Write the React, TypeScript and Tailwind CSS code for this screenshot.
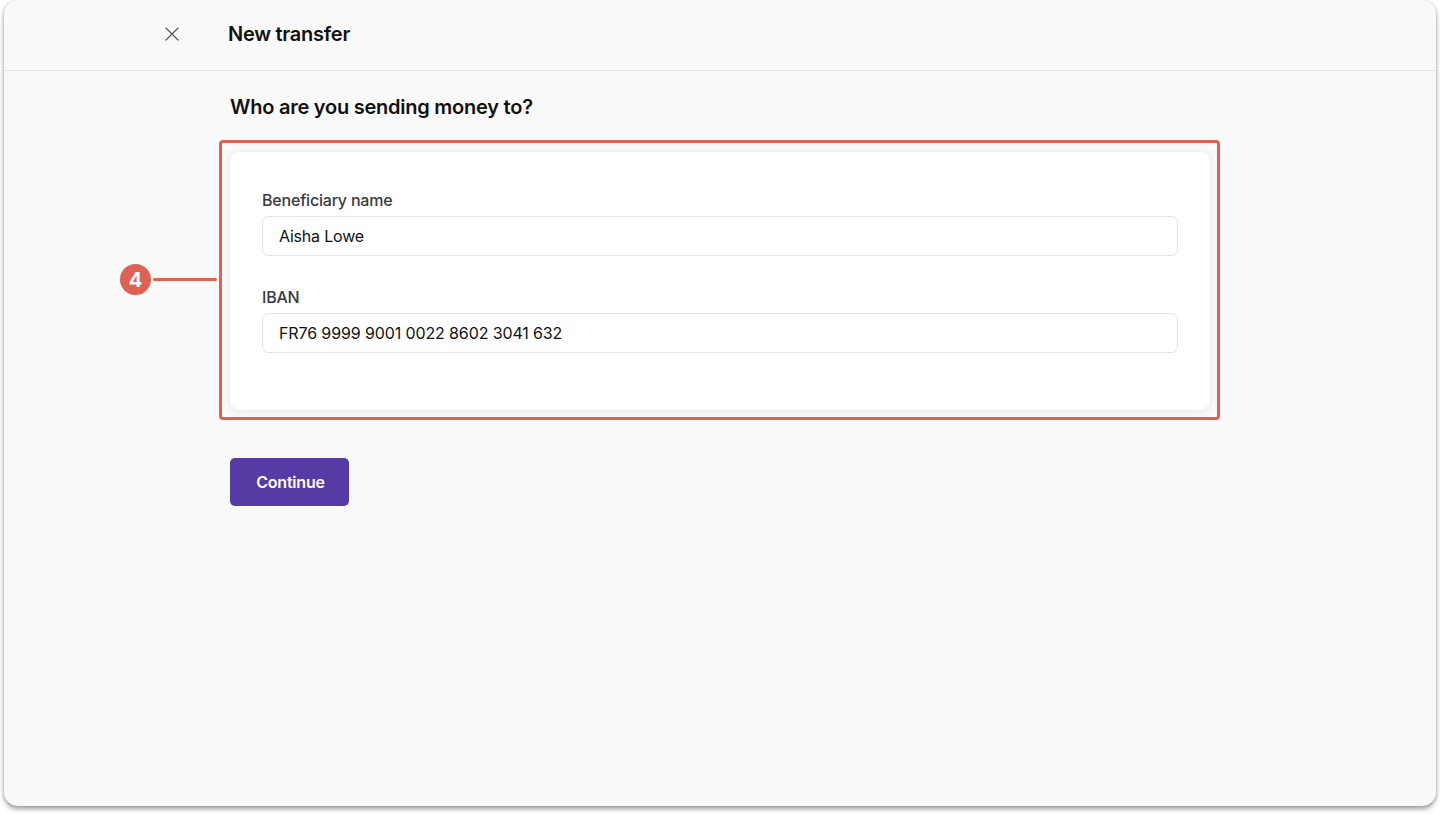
export default function App() {
  return (
    <div className="h-[814px] w-full overflow-hidden bg-white px-1 pb-2 font-['Inter',sans-serif]">
      <div className="flex h-[806px] flex-col rounded-[14px] bg-[#f9f9f9] shadow-[0_3px_5px_rgba(0,0,0,0.38),0_0_2px_rgba(0,0,0,0.15)]">
        <header className="flex h-[71px] shrink-0 items-center border-b border-[#e5e5e5] pb-[2px] pl-[160px]">
          <svg width="16" height="16" viewBox="0 0 16 16" fill="none" className="text-[#555]">
            <path d="M2 2 L14 14 M14 2 L2 14" stroke="currentColor" strokeWidth="1.2" strokeLinecap="round" />
          </svg>
          <h1 className="ml-[48px] text-[20px] font-semibold tracking-[-0.25px] text-[#111]">New transfer</h1>
        </header>
        <main className="ml-[226px] w-[980px]">
          <h2 className="mt-[23px] text-[20px] leading-[26px] font-semibold tracking-[-0.24px] text-[#111]">Who are you sending money to?</h2>
          <section className="relative mt-[32px] h-[258px] rounded-[10px] bg-white px-[32px] pt-[38px] shadow-[0_1px_8px_rgba(0,0,0,0.08)]">
            <div className="pointer-events-none absolute -top-[12px] -right-[10px] -bottom-[10px] -left-[11px] rounded-[4px] border-[3px] border-[#dd6253]" />
            <div className="absolute top-[112px] -left-[110px] flex items-center">
              <span className="flex h-[31px] w-[31px] items-center justify-center rounded-full bg-[#dd6253] text-[20px] font-bold text-white">4</span>
              <span className="ml-[2px] h-[3px] w-[64px] rounded-full bg-[#dd6253]" />
            </div>
            <label className="block">
              <span className="block text-[16px] leading-[20px] font-medium tracking-[-0.2px] text-[#3a3a3c]">Beneficiary name</span>
              <div className="mt-[6px] flex h-[40px] items-center rounded-[6px] border border-[#e3e3e3] bg-white px-[16px] text-[16px] tracking-[-0.2px] text-[#111]">Aisha Lowe</div>
            </label>
            <label className="mt-[31px] block">
              <span className="block text-[16px] leading-[20px] font-medium tracking-[-0.2px] text-[#3a3a3c]">IBAN</span>
              <div className="mt-[6px] flex h-[40px] items-center rounded-[6px] border border-[#e3e3e3] bg-white px-[16px] text-[16px] tracking-[-0.12px] text-[#111]">FR76 9999 9001 0022 8602 3041 632</div>
            </label>
          </section>
          <button className="mt-[48px] flex h-[48px] w-[119px] items-center justify-center rounded-[5px] bg-[#553ba3] pl-[2px] text-[16px] font-semibold tracking-[-0.2px] text-white">Continue</button>
        </main>
      </div>
    </div>
  );
}
